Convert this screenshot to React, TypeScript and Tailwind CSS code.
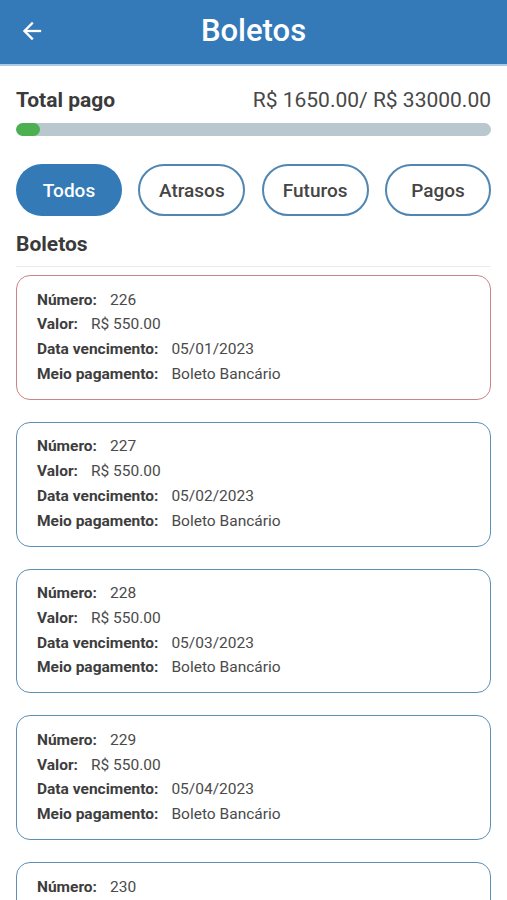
import React from "react";

const boletos = [
  { n: 226, d: "05/01/2023", late: true },
  { n: 227, d: "05/02/2023", late: false },
  { n: 228, d: "05/03/2023", late: false },
  { n: 229, d: "05/04/2023", late: false },
  { n: 230, d: "05/05/2023", late: false },
];

function Row({ label, value }: { label: string; value: string }) {
  return (
    <div className="flex items-center h-[24.7px]">
      <span className="font-bold text-[#3d3d3d]">{label}</span>
      <span className="ml-[13px] text-[#4a4a4a]">{value}</span>
    </div>
  );
}

export default function App() {
  return (
    <div
      className="w-[507px] h-[900px] overflow-hidden bg-white relative"
      style={{ fontFamily: "Roboto, 'Noto Sans', sans-serif" }}
    >
      <div className="absolute -right-[38px] top-[6px] w-[110px] h-[22px] bg-[#a3283f] rotate-45 opacity-90 blur-[1px]" />
      <header className="h-[66px] bg-[#347ab8] flex items-center relative border-b-2 border-[#a9cbe6]">
        <div className="absolute left-[20px] top-[19px]">
          <svg width="24" height="24" viewBox="0 0 24 24" fill="none" stroke="white" strokeWidth="2.3" strokeLinecap="square">
            <path d="M20 12H5" />
            <path d="M12 4.5L4.5 12L12 19.5" />
          </svg>
        </div>
        <h1 className="w-full text-center text-white text-[31px] font-medium -mt-[2px]">Boletos</h1>
      </header>

      <div className="px-[16px]">
        <div className="flex justify-between items-center mt-[21px] h-[28px]">
          <span className="text-[21px] font-bold text-[#3a3a3a]">Total pago</span>
          <span className="text-[21px] text-[#484848]">R$ 1650.00/ R$ 33000.00</span>
        </div>
        <div className="mt-[8px] h-[13px] rounded-full bg-[#b8c8ce] overflow-hidden">
          <div className="h-full w-[24px] rounded-full bg-[#4caf50]" />
        </div>

        <div className="flex justify-between mt-[28px]">
          <button className="w-[106px] h-[52px] rounded-full bg-[#337ab7] text-white text-[19px] font-medium pt-[2px]">Todos</button>
          <button className="w-[107px] h-[52px] rounded-full border-2 border-[#4f86b2] text-[#454545] text-[19px] font-medium pt-[2px]">Atrasos</button>
          <button className="w-[107px] h-[52px] rounded-full border-2 border-[#4f86b2] text-[#454545] text-[19px] font-medium pt-[2px]">Futuros</button>
          <button className="w-[106px] h-[52px] rounded-full border-2 border-[#4f86b2] text-[#454545] text-[19px] font-medium pt-[2px]">Pagos</button>
        </div>

        <h2 className="mt-[15px] text-[21px] font-bold text-[#3a3a3a] leading-[26px]">Boletos</h2>
        <div className="mt-[9px] h-px bg-[#ececec]" />

        <div className="flex flex-col gap-[22px] mt-[8px]">
          {boletos.map((b) => (
            <div
              key={b.n}
              className={`rounded-[14px] border-[1.5px] px-[20px] py-[12px] text-[15.5px] ${
                b.late ? "border-[#c98484]" : "border-[#5d8fb3]"
              }`}
            >
              <Row label="Número:" value={String(b.n)} />
              <Row label="Valor:" value="R$ 550.00" />
              <Row label="Data vencimento:" value={b.d} />
              <Row label="Meio pagamento:" value="Boleto Bancário" />
            </div>
          ))}
        </div>
      </div>
    </div>
  );
}
